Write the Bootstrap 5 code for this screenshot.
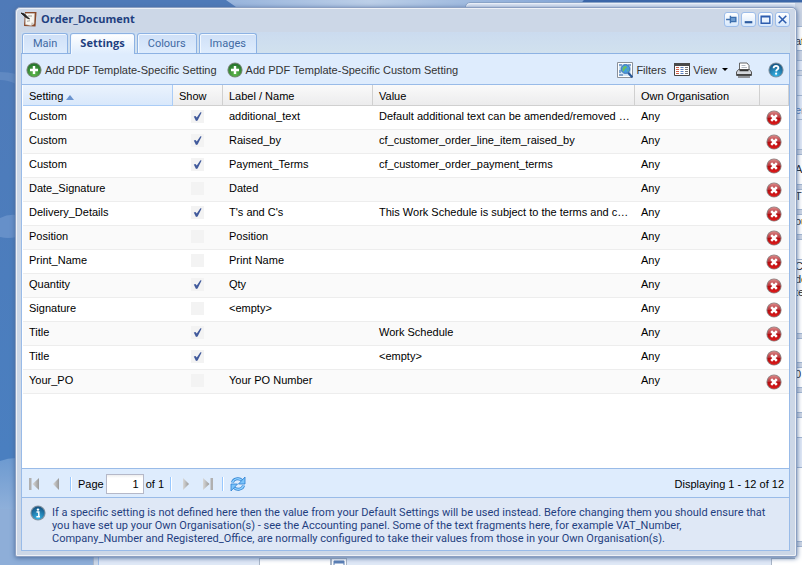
<!DOCTYPE html>
<html lang="en">
<head>
<meta charset="utf-8">
<meta name="viewport" content="width=device-width, initial-scale=1">
<title>Order_Document</title>
<link href="https://cdn.jsdelivr.net/npm/bootstrap@5.3.0/dist/css/bootstrap.min.css" rel="stylesheet">
<style>
:root{--line:#99bbe8;--ink:#1f3f80;--ui:Roboto,"Open Sans",sans-serif;--ui-bold:"Open Sans","Noto Sans",sans-serif}
body{font-family:"Liberation Sans",Arial,sans-serif;font-size:11px;line-height:14px;color:#000;background:#6d97cc}
.desk{min-height:100vh;padding:7px 5px 8px 15px;isolation:isolate}
.wallpaper{z-index:-3}
.back-win{position:absolute;z-index:-2;background:#dfe8f6;border:1px solid #8ba4c8;box-shadow:inset 1px 1px #eef3fa}
.back-main{left:465px;right:-40px;top:2px;bottom:9px;border-radius:5px 0 0 0;padding-left:329px}
.back-low{left:93px;right:-40px;top:300px;bottom:-40px;padding:258px 38px 0 0;border-width:0 1px;border-color:#aab6c9;box-shadow:inset 4px 0 #ccd7e7,inset 5px 0 #99bbe8}
.back-low span{height:20px;background:#fff;border:1px solid #a9b5c6}
.field-a{width:72px;margin-left:165px}.field-b{width:16px}.field-c{width:32px}
.strip div{border-bottom:1px solid #a3b6d0;line-height:13px;white-space:nowrap;overflow:hidden;background:#fff;color:#222}
.strip .blue{background:#dfe8f6;color:#4a74b0}
.strip .grey{background:#ccd5e4}
.h-4{height:5px}.h-9{height:10px}.h-20{height:20px}.h-24{height:24px}.h-28{height:30px}.h-70{height:74px}
.win{border:1px solid #8b9fc2;border-radius:5px 5px 2px 2px;background:#ccd7e7;box-shadow:inset 1px 1px #eef1f6,inset -1px -1px #eef1f6,0 1px 5px #4a6a9a;padding:0 6px 5px 5px}
.title-bar{height:24px;font-family:var(--ui-bold);font-size:11px;color:var(--ink);padding-bottom:2px}
.tools-win{gap:2px}
.tool{width:15px;height:15px;padding:0;border:1px solid #9dbdea;border-radius:3px;background:linear-gradient(#fff,#d7e8fc);line-height:0}
.tab-row{height:22px;padding:1px 1px 0;gap:2px;background:linear-gradient(#cbdbef,#d1e1ee);border-bottom:1px solid #8db2e3}
.tab-row .nav-link{font-family:var(--ui);font-size:11px;line-height:20px;padding:0 10px;color:#416aa3;border:1px solid #8db2e3;border-bottom:0;border-radius:3px 3px 0 0;background:linear-gradient(#cfe0f7,#deecfd);box-shadow:inset 0 1px #f2f8ff,inset 1px 0 #f2f8ff;height:20px;margin:0}
.tab-row .nav-link.active{font-family:var(--ui-bold);font-weight:700;color:var(--ink);height:21px;line-height:18px;padding:0 9px;background:linear-gradient(#fff,#deecfd)}
.pane{border:1px solid var(--line);border-top:0}
.tools{height:31px;background:#deecfd;border-bottom:1px solid var(--line);padding:1px 5px 0 4px;color:#333}
.tools button,.pager button{border:0;background:none;padding:0;color:inherit;line-height:16px}
.tools svg{margin-right:3px}
.tools .bare svg{margin:0}
.tools .add-first{margin-right:10px}
.tools .dropdown-toggle::after{color:#000;margin-left:5px}
.grid-box{background:#fff;padding-left:1px}
.grid{table-layout:fixed;width:100%;border-collapse:separate;border-spacing:0}
.grid th{font-weight:400;height:21px;padding:2px 6px 0;background:linear-gradient(#fafafa,#ececed);border-right:1px solid #d0d0d0;border-bottom:1px solid #d0d0d0;white-space:nowrap}
.grid th.sorted{background:linear-gradient(#ebf3fd,#d9e8fb);border-color:#aaccf6}
.grid td{height:24px;padding:0 2px 4px 6px;border-bottom:1px solid #ededed;white-space:nowrap;overflow:hidden;text-overflow:ellipsis}
.grid tr:nth-child(even) td{background:#fafafa}
.grid td:nth-child(2){padding:0 1px 2px 0}
.grid td:last-child{padding:1px 0 0 6px}
.grid td:last-child button{border:0;background:none;padding:0;display:block;line-height:0}
.tick{appearance:none;display:block;width:13px;height:13px;margin:0 auto;border:0;background:#f3f3f3}
.tick:checked{background:#f3f3f3 url("data:image/svg+xml,%3Csvg xmlns='http://www.w3.org/2000/svg' viewBox='0 0 13 13'%3E%3Cpath d='M2.800 6.500 4.500 6 5.800 7.600 9.400 2.200 10.600 2.400 6.600 10.600 5 11Z' fill='%23415a9c'/%3E%3C/svg%3E")}
.pager{height:30px;background:#deecfd;border-top:1px solid var(--line);border-bottom:1px solid var(--line);padding:1px 5px 0 4px;gap:6px}
.pager .bar{width:2px;height:14px;background:#98c8ff;border-right:1px solid #fff}
.page-set{gap:2px}
.page-no{width:38px;height:20px;border:1px solid #b5b8c8;border-radius:0;padding:0 4px;text-align:right;background:linear-gradient(#eee,#fff 3px)}
.note{font-family:var(--ui);font-size:11px;line-height:13px;color:var(--ink);background:#dfe8f6;padding:7px 6px 5px 8px;gap:6px;min-height:52px}
.note p{padding-top:1px}
</style>
<script src="https://cdn.jsdelivr.net/npm/bootstrap@5.3.0/dist/js/bootstrap.bundle.min.js"></script>
</head>
<body>
<svg width="0" height="0" class="position-absolute" aria-hidden="true">
<defs>
<radialGradient id="gGreen" cx=".5" cy=".8" r=".8"><stop offset="0" stop-color="#5fbb4c"/><stop offset="1" stop-color="#22702a"/></radialGradient>
<linearGradient id="gRed" x2="0" y2="1"><stop offset="0" stop-color="#dc8a8a"/><stop offset=".48" stop-color="#b93338"/><stop offset=".5" stop-color="#b30d10"/><stop offset="1" stop-color="#e01a1a"/></linearGradient>
<radialGradient id="gBlue" cx=".5" cy=".9" r=".9"><stop offset="0" stop-color="#35b5e8"/><stop offset="1" stop-color="#14507f"/></radialGradient>
<linearGradient id="gNav" x2="1"><stop offset="0" stop-color="#d8d8d8"/><stop offset="1" stop-color="#999"/></linearGradient>
</defs>
<symbol id="add" viewBox="0 0 16 16"><circle cx="8" cy="8" r="7.6" fill="#7d8a7d"/><circle cx="8" cy="8" r="6.6" fill="url(#gGreen)"/><path d="M8 4v8M4 8h8" stroke="#fff" stroke-width="2.4"/></symbol>
<symbol id="del" viewBox="0 0 16 16"><circle cx="8" cy="8" r="7.6" fill="#8d8585"/><circle cx="8" cy="8" r="6.7" fill="url(#gRed)"/><path d="m5.2 5.2 5.6 5.6m0-5.6-5.6 5.6" stroke="#fff" stroke-width="2.5"/></symbol>
<symbol id="help" viewBox="0 0 16 16"><circle cx="8" cy="8" r="7.6" fill="#8494a2"/><circle cx="8" cy="8" r="6.6" fill="url(#gBlue)"/><path d="M5.6 6.3c0-3.3 5-3 4.800-.2C10.300 7.600 8.200 7.600 8.100 9.400" fill="none" stroke="#fff" stroke-width="1.8"/><circle cx="8.100" cy="11.700" r="1.100" fill="#fff"/></symbol>
<symbol id="info" viewBox="0 0 16 16"><circle cx="8" cy="8" r="7.6" fill="#8494a2"/><circle cx="8" cy="8" r="6.500" fill="url(#gBlue)"/><circle cx="8" cy="4.600" r="1.200" fill="#fff"/><path d="M6.500 7H8.800v4.400M6.400 11.700h3.600" fill="none" stroke="#fff" stroke-width="1.500"/></symbol>
<symbol id="prev" viewBox="0 0 16 16"><path d="M11 2v12L5 8Z" fill="url(#gNav)"/></symbol>
<symbol id="next" viewBox="0 0 16 16"><path d="M5 2v12L11 8Z" fill="url(#gNav)"/></symbol>
<symbol id="first" viewBox="0 0 16 16"><path d="M13 2v12L6.500 8Z" fill="url(#gNav)"/><path d="M3 2h2.500v12H3z" fill="#b0b0b0"/></symbol>
<symbol id="last" viewBox="0 0 16 16"><path d="M3 2v12L9.500 8Z" fill="url(#gNav)"/><path d="M10.500 2h2.500v12h-2.500z" fill="#b0b0b0"/></symbol>
<symbol id="reload" viewBox="0 0 16 16"><path d="M2.500 6.500C3.500 2.500 9 1.500 12 4.500M13.500 9.500C12.500 13.500 7 14.500 4 11.500" fill="none" stroke="#2a7fd0" stroke-width="3"/><path d="M2.500 6.500C3.500 2.500 9 1.500 12 4.500M13.500 9.500C12.500 13.500 7 14.500 4 11.500" fill="none" stroke="#8fd0ff" stroke-width="1.400"/><path d="M15 1v7H8.500ZM1 15V8h6.500Z" fill="#7cc4fa" stroke="#2a7fd0" stroke-width=".8"/></symbol>
<symbol id="filters" viewBox="0 0 16 16"><path d="M.5.5h15v15H.5z" fill="#fff" stroke="#8a9099"/><path d="M2 2h12v12H2z" fill="#d3e4f4"/><path d="M2 2h3v2H2zM11 2h3v2h-3zM2 8h2v3H2zM2 12h4v2H2z" fill="#7fa3cc"/><path d="m11 10.500 4.300 4.800" stroke="#26579a" stroke-width="2.200"/><circle cx="8.500" cy="7" r="4.400" fill="#459ce0" stroke="#3c74b4"/><path d="M5.500 6.500c1-3 3-3 4-2s0 2-1 2-1 3-2 3-1-2-1-3M10.500 7l1 1-1 2z" fill="#6cc060"/></symbol>
<symbol id="view" viewBox="0 0 16 13"><path d="M.5.500h15v12H.5z" fill="#fff" stroke="#444"/><path d="M0 0h16v3H0z" fill="#4a4a4a"/><g stroke-width="1"><path d="M2 4.500h3M2 6.500h3M2 8.500h3M2 10.500h3" stroke="#d0604a"/><path d="M6.500 4.500h3M6.500 6.500h3M6.500 8.500h3M6.500 10.500h3" stroke="#5a80c0"/><path d="M11 4.500h3M11 6.500h3M11 8.500h3M11 10.500h3" stroke="#777"/></g></symbol>
<symbol id="print" viewBox="0 0 16 16"><path d="M3.500 8.500 3.500 1h7.500l2 2.500v5" fill="#fff" stroke="#666"/><path d="M5.500 3.500h4M5.500 5.500h5.500" stroke="#b5bac2"/><path d="M2.500 7.500h11l2 2.500v3.500H.5V10Z" fill="#d4d7dc" stroke="#555"/><path d="M3.500 8.500h9" stroke="#333" stroke-width="1.500"/><path d="M1 12h14v1.500H1Z" fill="#444"/><path d="M2 15h12" stroke="#777" stroke-width="1.500"/></symbol>
<symbol id="doc" viewBox="0 0 16 16"><path d="M4 1h11.500l-1 14.500L3 15Z" fill="#8a4a2a"/><path d="M4.500 2.500h9L13 13l-3 1.500-5.500-1Z" fill="#f8f6f0" stroke="#ccc" stroke-width=".5"/><path d="m10 14.500.5-3L13 12Z" fill="#c9c4bc"/><path d="M0 2 3.500 3 8.500 8 5 6.500Z" fill="#222" stroke="#222"/><path d="M6 10.500c1-1 2 0 3-1M7 5h4" fill="none" stroke="#999"/></symbol>
</svg>

<div class="desk position-relative overflow-hidden d-flex flex-column">
<svg class="wallpaper position-absolute top-0 start-0 w-100 h-100" viewBox="0 0 802 565" preserveAspectRatio="none" aria-hidden="true">
<defs><linearGradient id="w1" x2="0" y2="1"><stop offset="0" stop-color="#4f7ab8"/><stop offset=".8" stop-color="#4a7fc0"/></linearGradient><linearGradient id="w2" x2="0" y2="1"><stop offset="0" stop-color="#6d9ad0"/><stop offset="1" stop-color="#8fb0da"/></linearGradient><linearGradient id="w3" x2="1"><stop offset="0" stop-color="#98b4dc"/><stop offset=".4" stop-color="#bccfe8"/><stop offset="1" stop-color="#7fa2d4"/></linearGradient></defs>
<path d="M0 0h802v565H0z" fill="url(#w1)"/>
<path d="M0 72q8 0 16 2v10Q8 80 0 80Z" fill="#6089c2"/>
<path d="M0 218q8-4 16-3v22q-8 2-16 0Z" fill="#6690c9"/>
<path d="M0 461q8-3 16-3v52H0Z" fill="url(#w2)"/>
<path d="M0 509h120v56H0Z" fill="#8eaed8"/>
<path d="M226 0h358q-8 8-12 14H246Z" fill="url(#w3)"/>
<path d="M584 0h218v20H570Z" fill="#3b66a8"/>
</svg>
<div class="back-win back-low d-flex align-items-start" aria-hidden="true"><span class="field-a"></span><span class="field-b"><svg class="d-block" width="14" height="10" viewBox="0 0 14 10"><path d="M2 2h10v9H2z" fill="#fff" stroke="#5b7fb5"/><path d="M2 2h10v2.500H2z" fill="#5b7fb5"/><path d="M8 6h2v2H8z" fill="#b02020"/></svg></span><span class="field-c ms-auto"></span></div>
<div class="back-win back-main strip" aria-hidden="true">
<div class="grey h-24"></div><div class="h-24 pt-2">at</div><div class="grey h-9"></div><div class="blue h-9"></div><div class="h-4 grey"></div><div class="blue h-20"></div><div class="blue h-24 pt-2">er</div><div class="blue h-28"></div><div class="h-4 grey"></div>
<div class="h-28 pt-2">A</div><div class="h-4 grey"></div><div class="h-20">T</div><div class="h-4 grey"></div><div class="h-20">ou</div><div class="h-4 grey"></div><div class="h-20"></div><div class="h-70">Cr<br>de<br>te</div><div class="h-4 grey"></div><div class="h-24"></div><div class="h-4 grey"></div><div class="h-20">0</div><div class="h-4 grey"></div><div class="h-20"></div><div class="h-4 grey"></div><div class="h-20"></div><div class="blue h-28"></div><div class="h-70"></div><div class="h-4 grey"></div><div class="h-28"></div>
</div>

<main class="win flex-grow-1 d-flex flex-column">
<header class="title-bar d-flex align-items-center">
<svg width="16" height="16" class="me-1" aria-hidden="true"><use href="#doc"/></svg>
<strong class="me-auto">Order_Document</strong>
<div class="d-flex tools-win" role="group" aria-label="Window controls">
<button class="tool" aria-label="Pin"><svg width="13" height="13" viewBox="0 0 12 12"><path d="M1 6h4M5 2.500v7M5 4h5v4H5z" fill="#6c9bd0" stroke="#3d6fae" stroke-width="1.300"/></svg></button>
<button class="tool" aria-label="Minimise"><svg width="13" height="13" viewBox="0 0 12 12"><path d="M2.500 8.500h7" stroke="#2d5c9f" stroke-width="2"/></svg></button>
<button class="tool" aria-label="Maximise"><svg width="13" height="13" viewBox="0 0 12 12"><path d="M2 3h8v6.500H2zM2 3.500h8" fill="none" stroke="#2d5cae" stroke-width="1.300"/></svg></button>
<button class="tool" aria-label="Close"><svg width="13" height="13" viewBox="0 0 12 12"><path d="m2.500 2.500 7 7m0-7-7 7" stroke="#2d5cae" stroke-width="1.400"/></svg></button>
</div>
</header>
<nav class="nav flex-nowrap tab-row" aria-label="Sections">
<a class="nav-link" href="#main">Main</a><a class="nav-link active" aria-current="page" href="#settings">Settings</a><a class="nav-link" href="#colours">Colours</a><a class="nav-link" href="#images">Images</a>
</nav>
<section class="pane flex-grow-1 d-flex flex-column">
<div class="tools d-flex align-items-center flex-shrink-0">
<button class="d-flex align-items-center add-first"><svg width="16" height="16" aria-hidden="true"><use href="#add"/></svg>Add PDF Template-Specific Setting</button>
<button class="d-flex align-items-center me-auto"><svg width="16" height="16" aria-hidden="true"><use href="#add"/></svg>Add PDF Template-Specific Custom Setting</button>
<button class="d-flex align-items-center me-2"><svg width="16" height="16" aria-hidden="true"><use href="#filters"/></svg>Filters</button>
<button class="d-flex align-items-center dropdown-toggle me-2"><svg width="16" height="13" aria-hidden="true"><use href="#view"/></svg>View</button>
<button class="d-flex me-3 bare" aria-label="Print"><svg width="16" height="16"><use href="#print"/></svg></button>
<button class="d-flex bare" aria-label="Help"><svg width="16" height="16"><use href="#help"/></svg></button>
</div>
<div class="grid-box flex-grow-1">
<table class="grid">
<colgroup><col style="width:150px"><col style="width:50px"><col style="width:150px"><col><col style="width:125px"><col style="width:29px"></colgroup>
<thead><tr><th class="sorted" aria-sort="ascending">Setting <svg width="8" height="5" viewBox="0 0 8 5" aria-hidden="true"><path d="M0 5 4 0l4 5Z" fill="#6a93cf"/></svg></th><th>Show</th><th>Label / Name</th><th>Value</th><th>Own Organisation</th><th aria-label="Delete"></th></tr></thead>
<tbody>
<tr><td>Custom</td><td><input type="checkbox" class="tick" aria-label="Show additional_text" checked></td><td>additional_text</td><td>Default additional text can be amended/removed …</td><td>Any</td><td><button aria-label="Delete"><svg width="16" height="16"><use href="#del"/></svg></button></td></tr>
<tr><td>Custom</td><td><input type="checkbox" class="tick" aria-label="Show Raised_by" checked></td><td>Raised_by</td><td>cf_customer_order_line_item_raised_by</td><td>Any</td><td><button aria-label="Delete"><svg width="16" height="16"><use href="#del"/></svg></button></td></tr>
<tr><td>Custom</td><td><input type="checkbox" class="tick" aria-label="Show Payment_Terms" checked></td><td>Payment_Terms</td><td>cf_customer_order_payment_terms</td><td>Any</td><td><button aria-label="Delete"><svg width="16" height="16"><use href="#del"/></svg></button></td></tr>
<tr><td>Date_Signature</td><td><input type="checkbox" class="tick" aria-label="Show Dated"></td><td>Dated</td><td></td><td>Any</td><td><button aria-label="Delete"><svg width="16" height="16"><use href="#del"/></svg></button></td></tr>
<tr><td>Delivery_Details</td><td><input type="checkbox" class="tick" aria-label="Show T's and C's" checked></td><td>T's and C's</td><td>This Work Schedule is subject to the terms and c…</td><td>Any</td><td><button aria-label="Delete"><svg width="16" height="16"><use href="#del"/></svg></button></td></tr>
<tr><td>Position</td><td><input type="checkbox" class="tick" aria-label="Show Position"></td><td>Position</td><td></td><td>Any</td><td><button aria-label="Delete"><svg width="16" height="16"><use href="#del"/></svg></button></td></tr>
<tr><td>Print_Name</td><td><input type="checkbox" class="tick" aria-label="Show Print Name"></td><td>Print Name</td><td></td><td>Any</td><td><button aria-label="Delete"><svg width="16" height="16"><use href="#del"/></svg></button></td></tr>
<tr><td>Quantity</td><td><input type="checkbox" class="tick" aria-label="Show Qty" checked></td><td>Qty</td><td></td><td>Any</td><td><button aria-label="Delete"><svg width="16" height="16"><use href="#del"/></svg></button></td></tr>
<tr><td>Signature</td><td><input type="checkbox" class="tick" aria-label="Show Signature"></td><td>&lt;empty&gt;</td><td></td><td>Any</td><td><button aria-label="Delete"><svg width="16" height="16"><use href="#del"/></svg></button></td></tr>
<tr><td>Title</td><td><input type="checkbox" class="tick" aria-label="Show Title" checked></td><td></td><td>Work Schedule</td><td>Any</td><td><button aria-label="Delete"><svg width="16" height="16"><use href="#del"/></svg></button></td></tr>
<tr><td>Title</td><td><input type="checkbox" class="tick" aria-label="Show empty Title" checked></td><td></td><td>&lt;empty&gt;</td><td>Any</td><td><button aria-label="Delete"><svg width="16" height="16"><use href="#del"/></svg></button></td></tr>
<tr><td>Your_PO</td><td><input type="checkbox" class="tick" aria-label="Show Your PO Number"></td><td>Your PO Number</td><td></td><td>Any</td><td><button aria-label="Delete"><svg width="16" height="16"><use href="#del"/></svg></button></td></tr>
</tbody>
</table>
</div>
<div class="pager d-flex align-items-center flex-shrink-0">
<button aria-label="First page" class="d-flex"><svg width="16" height="16"><use href="#first"/></svg></button>
<button aria-label="Previous page" class="d-flex"><svg width="16" height="16"><use href="#prev"/></svg></button>
<span class="bar"></span>
<div class="page-set d-flex align-items-center"><label for="pg">Page</label><input id="pg" class="page-no" value="1"><span>of 1</span></div>
<span class="bar"></span>
<button aria-label="Next page" class="d-flex"><svg width="16" height="16"><use href="#next"/></svg></button>
<button aria-label="Last page" class="d-flex"><svg width="16" height="16"><use href="#last"/></svg></button>
<span class="bar"></span>
<button aria-label="Refresh" class="d-flex me-auto"><svg width="16" height="16"><use href="#reload"/></svg></button>
<span>Displaying 1 - 12 of 12</span>
</div>
<div class="note d-flex flex-shrink-0"><svg width="16" height="16" class="flex-shrink-0" aria-hidden="true"><use href="#info"/></svg><p class="m-0">If a specific setting is not defined here then the value from your Default Settings will be used instead. Before changing them you should ensure that<br>you have set up your Own Organisation(s) - see the Accounting panel. Some of the text fragments here, for example VAT_Number,<br>Company_Number and Registered_Office, are normally configured to take their values from those in your Own Organisation(s).</p></div>
</section>
</main>
</div>
</body>
</html>
